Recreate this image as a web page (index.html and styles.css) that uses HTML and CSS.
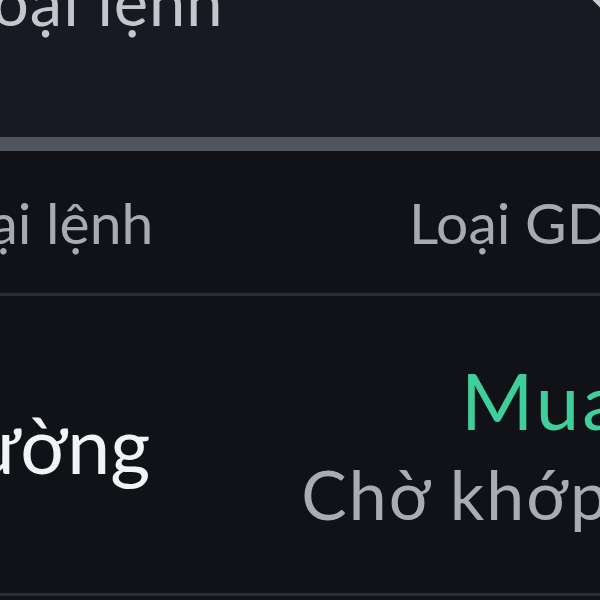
FILE: index.html
```html
<!DOCTYPE html>
<html lang="vi">
<head>
  <meta charset="UTF-8" />
  <meta name="viewport" content="width=device-width, initial-scale=1.0"/>
  <title>Sổ lệnh</title>
  <link rel="stylesheet" href="styles.css">
</head>
<body>
  <div class="page">
    <div class="sheet">

      <div class="field">
        <span class="field-value">Loại lệnh</span>
        <svg class="chevron" width="40" height="40" viewBox="0 0 40 40">
          <path d="M4 -10 L20 6 L36 -10" fill="none" stroke="#c9cbd1" stroke-width="5" stroke-linecap="round"/>
        </svg>
      </div>

      <div class="bar"></div>

      <div class="thead">
        <span class="th-left">Loại lệnh</span>
        <span>Loại GD</span>
      </div>

      <div class="trow">
        <div class="order-type">Thường</div>
        <div class="order-side">
          <div class="side buy">Mua</div>
          <div class="status">Chờ khớp</div>
        </div>
      </div>

    </div>
  </div>
</body>
</html>
```

FILE: styles.css
```css
body {
  margin: 0;
  background: #101217;
  font-family: Lato, "Noto Sans", sans-serif;
}
.page {
  width: 600px;
  height: 600px;
  overflow: hidden;
}
.sheet {
  margin-left: -80px;
  margin-right: -10px;
}

/* dropdown */
.field {
  height: 137px;
  background: #171a22;
  display: flex;
  justify-content: space-between;
  align-items: flex-start;
}
.field-value {
  font-size: 65px;
  line-height: 1;
  letter-spacing: 1px;
  margin-top: -31px;
  margin-left: 40px;
  color: #c4c6cc;
}
.chevron {
  margin-right: -12px;
}
.bar {
  height: 14px;
  background: #50545d;
}

/* table */
.thead {
  height: 142px;
  display: flex;
  justify-content: space-between;
  align-items: center;
  border-bottom: 3px solid #2a2d34;
  font-size: 57px;
  line-height: 1;
  color: #a7aab1;
}
.th-left {
  margin-left: 10px;
}
.trow {
  height: 297px;
  display: flex;
  justify-content: space-between;
  align-items: center;
  border-bottom: 3px solid #2a2d34;
}
.order-type {
  font-size: 77px;
  line-height: 1;
  margin-left: -36px;
  color: #f2f3f5;
}
.order-side {
  text-align: right;
  display: flex;
  flex-direction: column;
  align-items: flex-end;
  gap: 21px;
  line-height: 1;
}
.side {
  font-size: 78px;
}
.buy {
  color: #3ecf9a;
  letter-spacing: 3px;
  margin-right: -14px;
}
.status {
  font-size: 68px;
  letter-spacing: 2px;
  color: #a9acb3;
}
```
